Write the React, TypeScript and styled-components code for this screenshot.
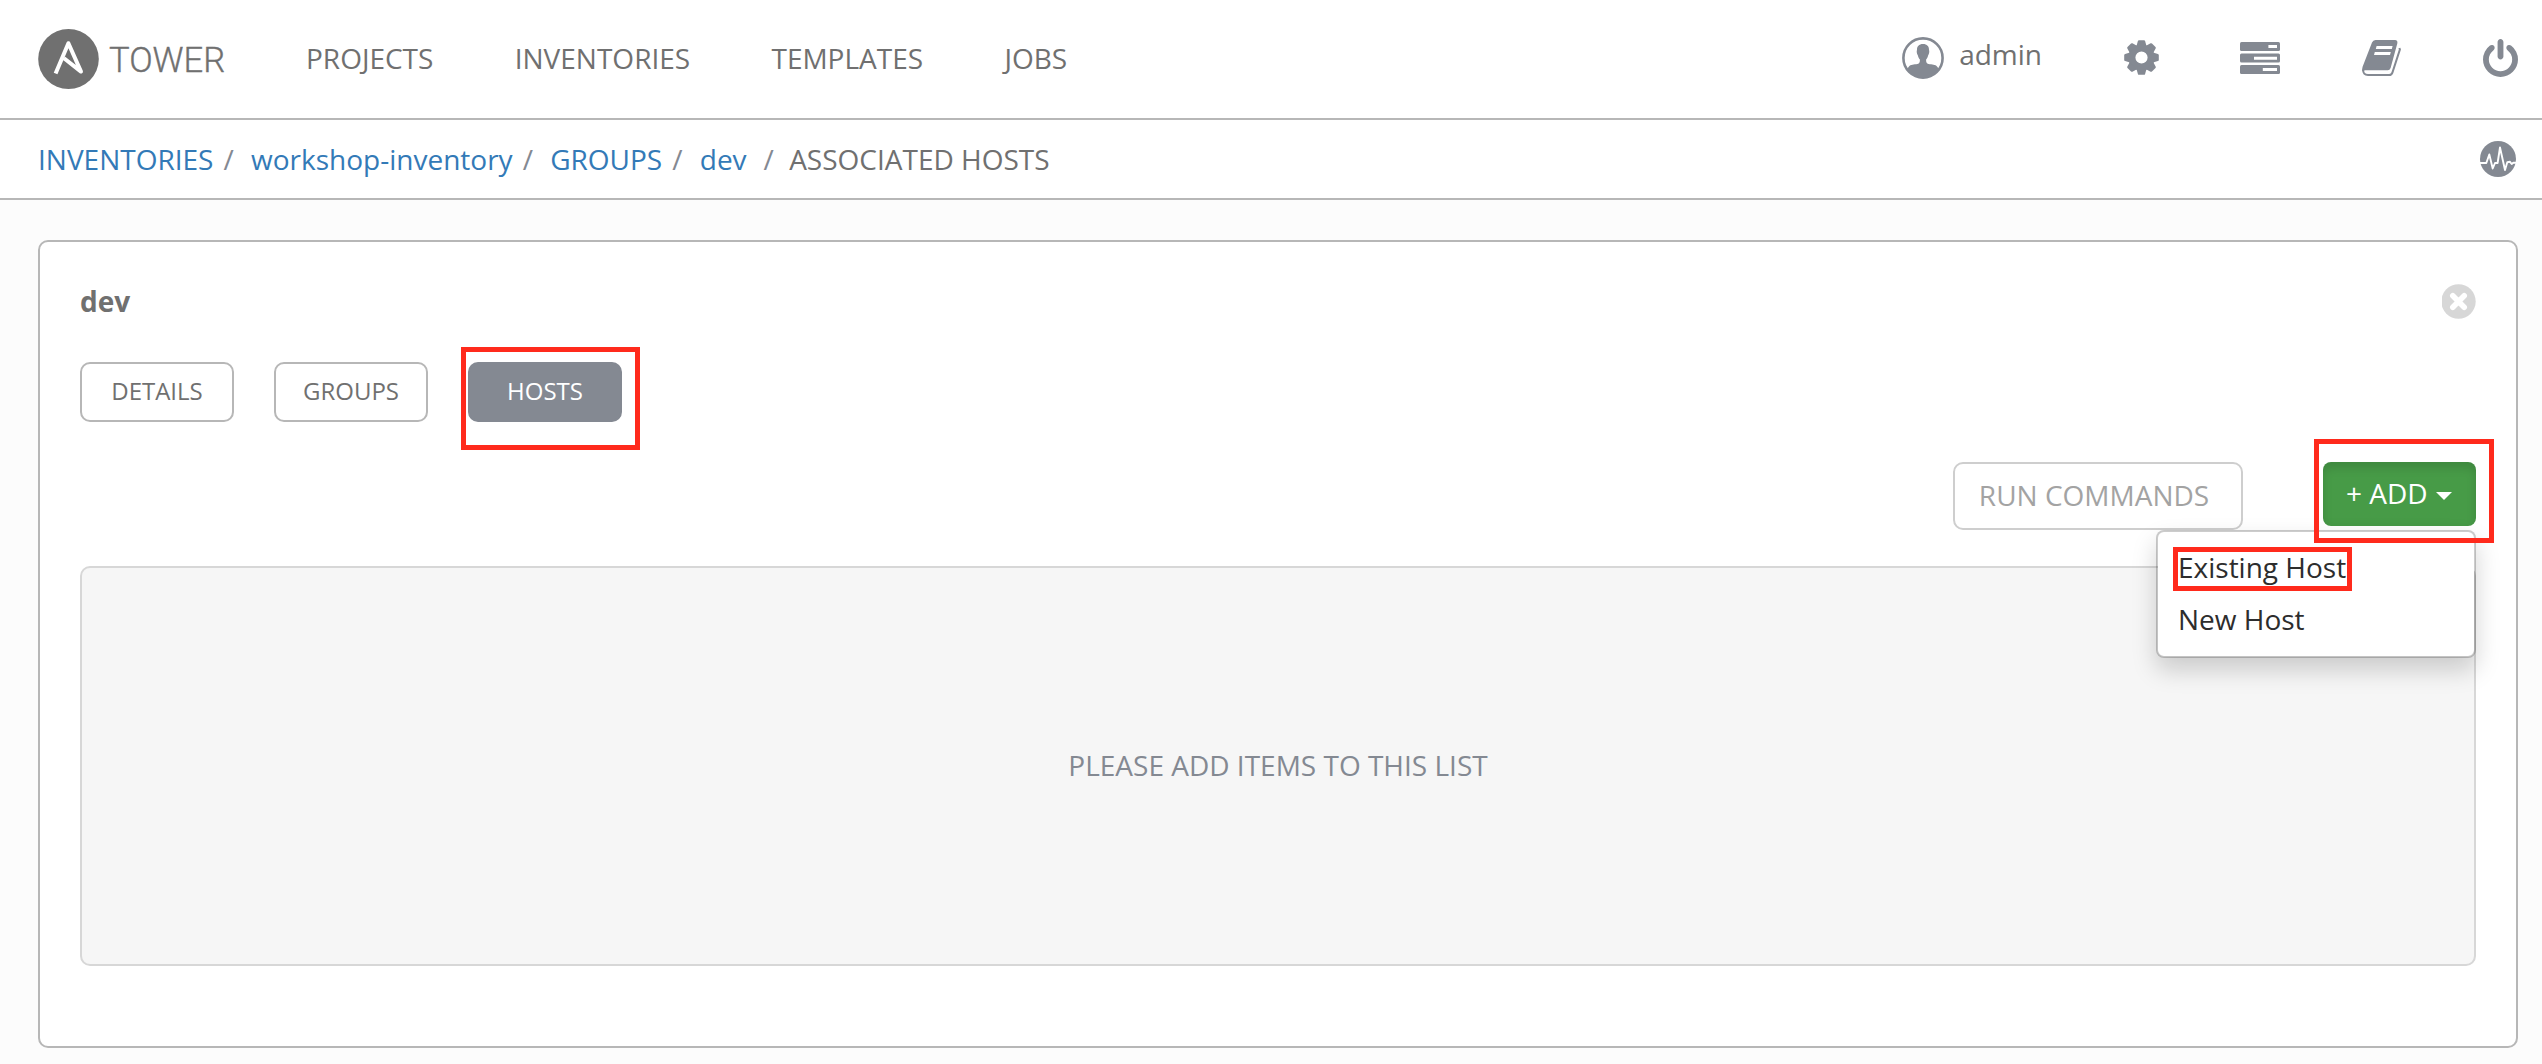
import React from 'react';
import styled, { createGlobalStyle } from 'styled-components';

const GlobalStyle = createGlobalStyle`
  *, *::before, *::after { box-sizing: border-box; }
  body {
    margin: 0;
    background: #fcfcfc;
    color: #707070;
    font-family: "Open Sans", "Noto Sans", sans-serif;
    font-size: 28px;
    line-height: 40px;
  }
`;

const Page = styled.div`
  display: flex;
  flex-direction: column;
  min-height: 100vh;
`;

const Header = styled.header`
  display: flex;
  align-items: center;
  height: 120px;
  padding: 0 24px 0 38px;
  background: #fff;
  border-bottom: 2px solid #b7b7b7;
`;

const Brand = styled.a`
  display: flex;
  align-items: center;
  width: 268px;
`;

const BrandName = styled.span`
  margin-left: 10px;
  padding-top: 1px;
  font-family: Roboto, sans-serif;
  font-weight: 300;
  font-size: 34.6px;
  -webkit-text-stroke: 0.35px currentColor;
`;

const Nav = styled.nav`
  display: flex;
  gap: 81.3px;
  padding-bottom: 2px;
`;

const NavLink = styled.a`
  color: #707070;
`;

const Tools = styled.div`
  display: flex;
  align-items: center;
  margin-left: auto;
  padding-bottom: 3px;
  color: #848992;
`;

const UserLink = styled.a`
  display: flex;
  align-items: center;
  color: #848992;
`;

const UserName = styled.span`
  margin-left: 15px;
  padding-bottom: 7px;
  color: #707070;
`;

const ToolLink = styled.a<{ $gap: number }>`
  display: flex;
  margin-left: ${(p) => p.$gap}px;
  color: inherit;
`;

const CrumbBar = styled.div`
  display: flex;
  align-items: center;
  justify-content: space-between;
  height: 80px;
  padding: 0 26px 0 38px;
  background: #fff;
  border-bottom: 2px solid #b7b7b7;
  color: #848992;
`;

const Crumbs = styled.ol`
  display: flex;
  margin: 0;
  padding: 0;
  list-style: none;
`;

const Crumb = styled.li<{ $current?: boolean; $spaced?: boolean }>`
  color: ${(p) => (p.$current ? '#707070' : '#337ab7')};
  &:not(:first-child)::before {
    content: "/\\00a0";
    padding: 0 ${(p) => (p.$spaced ? 8 : 10)}px 0 ${(p) => (p.$spaced ? 17 : 10)}px;
    color: #848992;
  }
`;

const Card = styled.main`
  display: flex;
  flex-direction: column;
  height: 808px;
  margin: 40px 24px 16px 38px;
  padding: 38px 40px 80px;
  background: #fff;
  border: 2px solid #b7b7b7;
  border-radius: 10px;
`;

const CardHeader = styled.div`
  display: flex;
  align-items: center;
  justify-content: space-between;
  height: 42px;
`;

const Title = styled.h1`
  margin: 0;
  font-size: 28px;
  line-height: 40px;
  font-weight: 700;
`;

const CloseButton = styled.button`
  display: flex;
  padding: 0;
  border: 0;
  background: none;
  color: #d7d7d7;
`;

const Tabs = styled.div`
  display: flex;
  gap: 40px;
  margin-top: 40px;
`;

const Callout = styled.span<{ $inset: string; $raised?: boolean }>`
  position: absolute;
  inset: ${(p) => p.$inset};
  z-index: ${(p) => (p.$raised ? 2 : 'auto')};
  border: 5px solid #ff2a1c;
  pointer-events: none;
`;

const Marked = styled.span`
  position: relative;
  display: inline-flex;
`;

const Tab = styled.button<{ $active?: boolean }>`
  width: 154px;
  height: 60px;
  padding: 0 0 2px;
  border: 2px solid ${(p) => (p.$active ? '#848992' : '#b7b7b7')};
  border-radius: 10px;
  background: ${(p) => (p.$active ? '#848992' : '#fff')};
  color: ${(p) => (p.$active ? '#fff' : '#707070')};
  font: inherit;
  font-size: 24px;
`;

const Actions = styled.div`
  display: flex;
  justify-content: flex-end;
  align-items: flex-start;
  gap: 80px;
  height: 68px;
  margin-top: 40px;
`;

const RunButton = styled.button`
  width: 290px;
  height: 68px;
  padding: 0 8px 2px 0;
  border: 2px solid #cecece;
  border-radius: 10px;
  background: #fff;
  color: #a3a3a3;
  font: inherit;
`;

const AddButton = styled.button`
  display: flex;
  align-items: center;
  width: 153px;
  height: 64px;
  padding: 0 0 2px 23px;
  border: 0;
  border-radius: 8px;
  background: #479b47;
  box-shadow: inset 0 6px 10px rgba(0, 0, 0, 0.125);
  color: #fff;
  font: inherit;
`;

const Caret = styled.i`
  margin: 5px 0 0 8px;
  border-top: 8px solid #fff;
  border-left: 8px solid transparent;
  border-right: 8px solid transparent;
`;

const Menu = styled.ul`
  position: absolute;
  z-index: 1;
  top: 68px;
  right: 0;
  width: 320px;
  height: 128px;
  margin: 0;
  padding: 10px 20px;
  list-style: none;
  background: #fff;
  background-clip: padding-box;
  border: 2px solid rgba(0, 0, 0, 0.2);
  border-radius: 8px;
  box-shadow: 0 12px 24px rgba(0, 0, 0, 0.175);
`;

const MenuItem = styled.li`
  height: 52px;
  line-height: 50px;
  color: #2d2d2d;
`;

const Empty = styled.div`
  display: flex;
  flex: none;
  align-items: center;
  justify-content: center;
  height: 400px;
  margin-top: 36px;
  padding-bottom: 2px;
  border: 2px solid #d7d7d7;
  border-radius: 10px;
  background: #f6f6f6;
  color: #848992;
`;

const Logo = () => (
  <svg width="61" height="60" viewBox="0 0 61 60">
    <ellipse cx="30.5" cy="30" rx="30.3" ry="30" fill="#707070" />
    <path d="M17.6 44.5L30.4 14.2L43 42.6L26 29.2" fill="none" stroke="#fff" strokeWidth="4" strokeLinejoin="round" />
  </svg>
);

const UserIcon = () => (
  <svg width="42" height="42" viewBox="0 0 42 42">
    <circle cx="21" cy="21" r="19.6" fill="none" stroke="currentColor" strokeWidth="2.6" />
    <path
      d="M21 7C17 7 14.8 9.4 15 13C14.4 14 14.8 17 15.8 18.2C16.2 20 17 21.5 17.9 22.4C18 25 17.5 26.5 15.5 27C12 27.6 8.5 27.4 7 29.5L5 32C9 38 14.5 41 21 41S33 38 37 32L35 29.5C33.5 27.4 30 27.6 26.5 27C24.5 26.5 24 25 24.1 22.4C25 21.5 25.8 20 26.2 18.2C27.2 17 27.6 14 27 13C27.2 9.4 25 7 21 7Z"
      fill="currentColor"
    />
  </svg>
);

const GearIcon = () => (
  <svg width="35" height="35" viewBox="-17.5 -17.5 35 35">
    <circle r="9.6" fill="none" stroke="currentColor" strokeWidth="7" />
    {[0, 45, 90, 135, 180, 225, 270, 315].map((a) => (
      <path
        key={a}
        d="M-5 -11.5L-3.6 -16.4Q-3.4 -17.3 -2.5 -17.3H2.5Q3.4 -17.3 3.6 -16.4L5 -11.5Z"
        transform={`rotate(${a})`}
        fill="currentColor"
      />
    ))}
  </svg>
);

const ServerIcon = () => (
  <svg width="40" height="32" viewBox="0 0 40 32" fill="currentColor">
    <rect width="40" height="9" rx="1.5" />
    <rect y="11.6" width="40" height="8.8" rx="1.5" />
    <rect y="23" width="40" height="9" rx="1.5" />
    <path d="M28.4 3H37V6H28.4ZM14 14.8H37V17.7H14ZM22.8 26.1H37V29H22.8Z" fill="#fff" />
  </svg>
);

const BookIcon = () => (
  <svg width="40" height="36" viewBox="0 0 40 36">
    <path d="M13.5 0H33Q36 .3 35.3 3.5L28.6 28Q27.8 30.2 25.8 30.2H3.2L0.2 31Q0 29 .6 26.8L10 2.5Q11 0 13.5 0Z" fill="currentColor" />
    <path d="M1.1 29.5Q1 35 6 35H27.2Q29.6 35 30.4 32.6L37.9 9.5L37.4 8" fill="none" stroke="currentColor" strokeWidth="2" />
    <path d="M14.6 6H30.6L29.8 9H13.8ZM12.8 12H28.8L28 15H12Z" fill="#fff" />
  </svg>
);

const PowerIcon = () => (
  <svg width="35" height="38" viewBox="128 0 1536 1664" fill="currentColor">
    <path d="M1664 896q0 156-61 298t-164 245-245 164-298 61-298-61-245-164-164-245-61-298q0-182 80.500-343t226.500-270q43-32 95.500-25t83.500 50q32 42 24.500 94.500t-49.500 84.500q-98 74-151.500 181t-53.500 228q0 104 40.500 198.500t109.500 163.500 163.500 109.500 198.500 40.500 198.500-40.500 163.500-109.500 109.500-163.500 40.500-198.500q0-121-53.500-228t-151.500-181q-42-32-49.500-84.500t24.500-94.500q31-43 84-50t95 25q146 109 226.500 270t80.500 343zm-640-768v640q0 52-38 90t-90 38-90-38-38-90v-640q0-52 38-90t90-38 90 38 38 90z" />
  </svg>
);

const ActivityIcon = () => (
  <svg width="36" height="36" viewBox="0 0 36 36">
    <circle cx="18" cy="18" r="18" fill="currentColor" />
    <path
      d="M0 22H6.3L9.3 13.5L12.7 27.5L15 22H17.6L20 6.5L25 29L27.3 21.3L30 20.8L31.7 23L33.3 21.7H36"
      fill="none"
      stroke="#fff"
      strokeWidth="1.9"
      strokeLinejoin="round"
    />
  </svg>
);

const CloseIcon = () => (
  <svg width="34" height="35" viewBox="0 0 34 35">
    <circle cx="16.5" cy="17.5" r="17.2" fill="currentColor" />
    <path d="M10.8 11.8L22.2 23.2M22.2 11.8L10.8 23.2" stroke="#fff" strokeWidth="5.6" strokeLinecap="round" />
  </svg>
);

export default function App() {
  return (
    <Page>
      <GlobalStyle />
      <Header>
        <Brand>
          <Logo />
          <BrandName>TOWER</BrandName>
        </Brand>
        <Nav>
          <NavLink>PROJECTS</NavLink>
          <NavLink>INVENTORIES</NavLink>
          <NavLink>TEMPLATES</NavLink>
          <NavLink>JOBS</NavLink>
        </Nav>
        <Tools>
          <UserLink>
            <UserIcon />
            <UserName>admin</UserName>
          </UserLink>
          <ToolLink $gap={82}><GearIcon /></ToolLink>
          <ToolLink $gap={81}><ServerIcon /></ToolLink>
          <ToolLink $gap={82}><BookIcon /></ToolLink>
          <ToolLink $gap={81}><PowerIcon /></ToolLink>
        </Tools>
      </Header>
      <CrumbBar>
        <Crumbs>
          <Crumb>INVENTORIES</Crumb>
          <Crumb>workshop-inventory</Crumb>
          <Crumb>GROUPS</Crumb>
          <Crumb>dev</Crumb>
          <Crumb $current $spaced>ASSOCIATED HOSTS</Crumb>
        </Crumbs>
        <ActivityIcon />
      </CrumbBar>
      <Card>
        <CardHeader>
          <Title>dev</Title>
          <CloseButton aria-label="Close"><CloseIcon /></CloseButton>
        </CardHeader>
        <Tabs>
          <Tab>DETAILS</Tab>
          <Tab>GROUPS</Tab>
          <Marked>
            <Tab $active>HOSTS</Tab>
            <Callout $inset="-15px -18px -28px -7px" />
          </Marked>
        </Tabs>
        <Actions>
          <RunButton>RUN COMMANDS</RunButton>
          <Marked>
            <AddButton>+ ADD<Caret /></AddButton>
            <Menu>
              <MenuItem>
                <Marked>
                  Existing Host
                  <Callout $inset="5px -6px 1px -5px" />
                </Marked>
              </MenuItem>
              <MenuItem>New Host</MenuItem>
            </Menu>
            <Callout $raised $inset="-23px -18px -17px -9px" />
          </Marked>
        </Actions>
        <Empty>PLEASE ADD ITEMS TO THIS LIST</Empty>
      </Card>
    </Page>
  );
}
